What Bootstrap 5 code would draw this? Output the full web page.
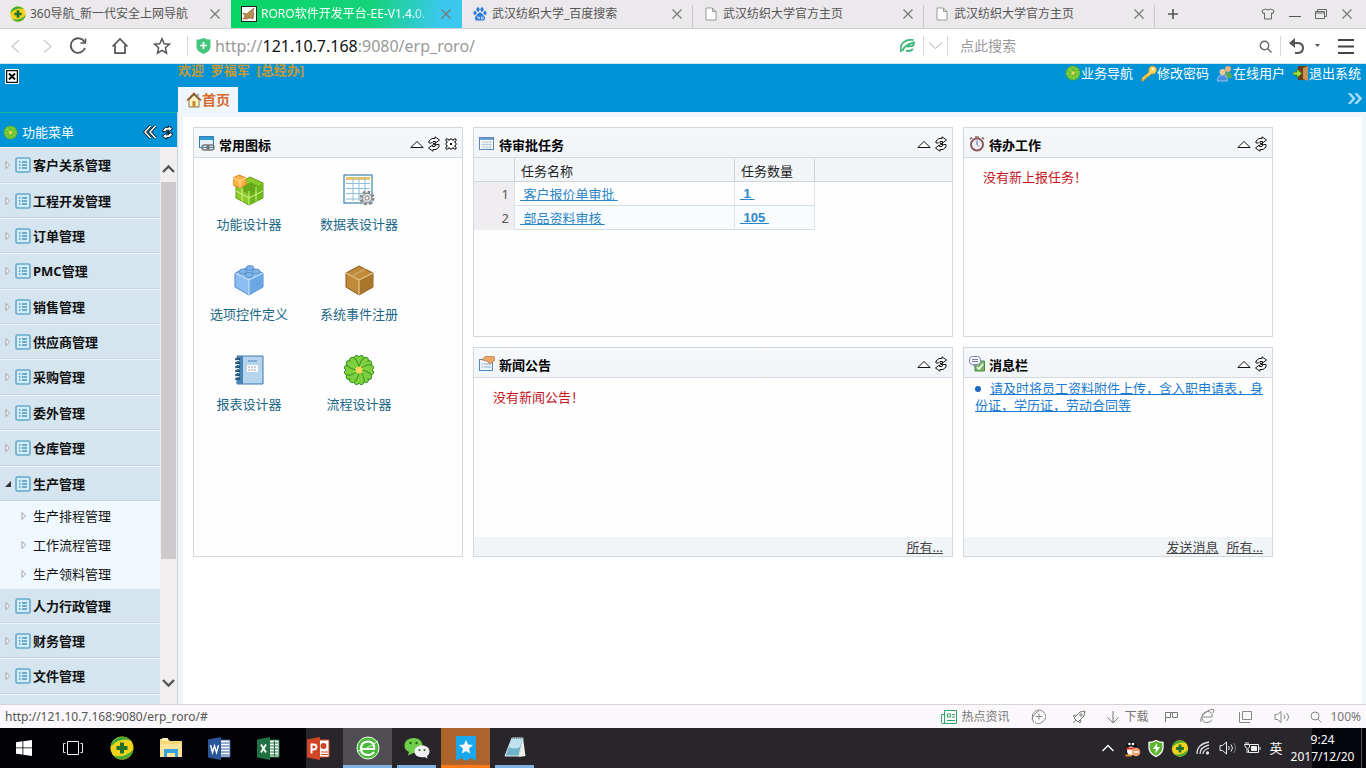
<!DOCTYPE html>
<html lang="zh-CN">
<head>
<meta charset="utf-8">
<meta name="viewport" content="width=device-width, initial-scale=1">
<title>RORO软件开发平台-EE-V1.4.0</title>
<link href="https://cdn.jsdelivr.net/npm/bootstrap@5.3.0/dist/css/bootstrap.min.css" rel="stylesheet">
<style>
body{font-family:"Noto Sans","Noto Sans CJK SC",sans-serif;font-size:13px;line-height:18px;color:#111;background:#fff}
svg{display:block;flex:none}
button{background:none;border:0;padding:0;color:inherit;display:flex;align-items:center;justify-content:center;flex:none}
a{color:inherit;text-decoration:none}
.fs12{font-size:12px}
/* browser tabs */
.tabbar{height:29px;flex:none;background:#ebe9eb;border-bottom:1px solid #d4d0d4;color:#555;font-size:12px}
.btab{flex:0 1 231px;min-width:0;padding:0 10px;gap:4px;position:relative}
.btab.sep::after{content:"";position:absolute;right:0;top:5px;height:23px;border-right:1px solid #cbc8cb}
.btab .cap{flex:1;min-width:0;overflow:hidden;white-space:nowrap}
.btab.current{background:linear-gradient(100deg,#08d564 0,#14d37a 60%,#3bc8ee 90%);color:#fff}
.btab.current .cap{-webkit-mask-image:linear-gradient(90deg,#000 85%,transparent)}
.winbtns{gap:14px;padding-right:13px;color:#666}
/* address bar */
.addr{height:35px;flex:none;border-bottom:1px solid #d5e4ec;color:#555}
.navbtn{width:31px;height:30px}
.navbtn.wide{width:42px}
.navgap{margin-left:6px}
.vline{width:1px;height:20px;background:#d9d9d9;flex:none}
.url{font-size:16px;line-height:24px;color:#999;white-space:nowrap}
.url b{font-weight:400;color:#111}
.find{width:299px;border:0;outline:0;font-size:14px;padding:0;color:#555}
.find::placeholder{color:#999;opacity:1}
.edge{margin-right:10px}
/* application */
.apphead{height:48px;flex:none;background:#0093d8}
.brand{width:178px;padding:5px}
.missing{width:14px;height:15px;border:1px solid #fff;background:#fff}
.hello{color:#c99a32;font-weight:700;line-height:13px}
.tools{gap:8px;color:#fff;padding-right:5px}
.hometab{width:60px;height:25px;background:#f0f6fd;color:#d9692b;font-weight:700;font-size:14px;margin-top:10px}
.side{width:178px;border-right:1px solid #cfd3dc}
.sidehead{height:35px;flex:none;background:#0093d8;border-top:1px solid #1cb3a0;color:#fff;padding:4px 4px 0 3px;margin-right:-1px}
.menu a{display:flex;align-items:center;gap:2px;height:35px;padding-left:5px;font-weight:700;color:#111;background:#d5e5f0;border-top:1px solid #eef6fb;border-bottom:1px solid #c3d4e0}
.menu a.tall{height:36px}
.menu .caret{width:8px}
.sub{background:#f0f8ff}
.menu .sub a{height:29px;font-weight:400;background:none;border:0;padding-left:21px;gap:4px}
.bar{width:17px;background:#f0eeef;padding:17px 1px 0}
.thumb{height:377px;background:#cdcacd;margin-top:8px}
.stage{background:#eef5fc;padding:5px 4px 0 5px}
.sheet{display:grid;grid-template-columns:270fr 480fr 310fr 79fr;grid-template-rows:210px 210px;gap:10px;padding:10px 0 0 10px;background:#fff}
.panel{border:1px solid #d3d8dd;background:#fefefe;display:flex;flex-direction:column;min-width:0}
.panel.both{grid-row:span 2}
.panel.mid{grid-column:2}
.panel.end{grid-column:3}
.phead{height:30px;background:linear-gradient(#f6f8fb,#f1f4f8);border-bottom:1px solid #d3d8dd;padding:2px 4px 0 5px;gap:4px}
.phead h2{font-size:13px;line-height:18px;font-weight:700;margin:3px 0 0;flex:1;color:#000}
.phead .btns{gap:3px}
.pfoot{height:19px;background:#f2f5f8;color:#444;padding-right:9px;gap:8px}
.pfoot a{text-decoration:underline}
.none{color:#c4141c;padding:10px 19px}
.shortcut{width:110px;height:90px;color:#1c6787;padding-top:16px;gap:9px}
.grid{width:100%;border-collapse:separate;border-spacing:0;table-layout:fixed}
.grid th{height:24px;background:#f2f5f8;font-weight:400;border-right:1px solid #ccd5da;border-bottom:1px solid #cfd6db;padding:2px 6px 0;color:#222}
.grid th:last-child{border-right:0}
.grid td{height:24px;border-right:1px solid #dbe3ea;border-bottom:1px solid #d3e0e4;padding:0 5px}
.grid td:first-child{background:#efedf0;text-align:right;color:#555;border-bottom-color:#efedf0}
.grid td:last-child{border:0}
.grid tr.alt td:nth-child(n+2):nth-child(-n+3){background:#f9fcff}
.grid a{color:#2b86c8;text-decoration:underline;white-space:pre}
.num{font-family:"Liberation Sans",sans-serif;font-weight:700}
.msg{padding:2px 6px 0 11px;line-height:17px;color:#1b7bd0}
.msg a{text-decoration:underline}
.dot{display:inline-block;width:6px;height:6px;border-radius:50%;background:#1a68c4;margin:0 9px 1px 0}
/* status bar and taskbar */
.status{height:24px;flex:none;background:#faf8fb;border-top:1px solid #d6d2d6;color:#777;padding:0 5px}
.status .url{font-size:12px;color:#555}
.sgap{margin-left:22px}
.sgap2{margin-left:26px}
.task{height:40px;flex:none;background:#28262a;color:#fff}
.pins{background:linear-gradient(90deg,#030207 306px,#28262a 306px)}
.pin{width:49px;height:40px;border-bottom:3px solid transparent;padding-top:3px}
.pin:first-child{width:48px}
.pins .pin:last-child{width:50px}
.pin.run{border-bottom-color:#7fb2e2;width:39px;margin:0 5px}
.pin.on{background:#504e52;border-bottom-color:#7fb2e2;width:49px}
.pin.hot{background:#ad642c;border-bottom-color:#ff7a18}
.tray>*{width:24px;text-align:center}
.clock{background:linear-gradient(90deg,#28262a 24px,#04040b 24px);font-size:12px;line-height:17px;padding-right:4px;width:74px;border-right:1px solid #555;white-space:nowrap}
.peek{width:4px;background:#04040b}
</style>
</head>
<body class="vh-100 d-flex flex-column overflow-hidden">

<svg width="0" height="0" class="position-absolute" aria-hidden="true">
  <symbol id="x" viewBox="0 0 12 12"><path d="M1.500 1.500l9 9m0-9l-9 9" stroke="#777" stroke-width="1.200" fill="none"/></symbol>
  <symbol id="page" viewBox="0 0 12 14"><path d="M1 1h6.500L11 4.500V13H1zM7.500 1v3.500H11" fill="#fff" stroke="#999"/></symbol>
  <symbol id="c360" viewBox="0 0 24 24"><circle cx="12" cy="12" r="11.500" fill="#f4d31d"/><path d="M.5 11C2 1 14-3 21 5c-6-3-15-1-20.500 6zM23.500 13c-1 10-14 14-20.500 6 6 3 15 1 20.500-6z" fill="#3faa35"/><path d="M12 6.500v11M6.500 12h11" stroke="#23702b" stroke-width="4"/></symbol>
  <symbol id="flower" viewBox="0 0 32 32"><g fill="#7ed03c" stroke="#35912a" stroke-width="1"><path id="pt" d="M16 16C10 10 9.500 2.500 13 1.500q2.500-.3 3 1.500 .5-1.800 3-1.500C22.500 2.500 22 10 16 16z"/><use href="#pt" transform="rotate(45 16 16)"/><use href="#pt" transform="rotate(90 16 16)"/><use href="#pt" transform="rotate(135 16 16)"/><use href="#pt" transform="rotate(180 16 16)"/><use href="#pt" transform="rotate(225 16 16)"/><use href="#pt" transform="rotate(270 16 16)"/><use href="#pt" transform="rotate(315 16 16)"/></g><circle cx="16" cy="16" r="3.500" fill="#fbd45b"/></symbol>
  <symbol id="list" viewBox="0 0 16 16"><rect x="1" y="1" width="14" height="14" rx="1.500" fill="#d3ecf8" stroke="#66a9cc" stroke-width="1.600"/><path d="M4 5h1.500M4 8h1.500M4 11h1.500M7 5h5M7 8h5M7 11h5" stroke="#4e95bd" stroke-width="1.300"/></symbol>
  <symbol id="tri" viewBox="0 0 8 10"><path d="M1 1.500v7L4.500 5z" fill="#f7fafc" stroke="#999" stroke-width=".9"/></symbol>
  <symbol id="up" viewBox="0 0 14 12"><path d="M.8 9.500h12.400L7 3.500z" fill="#fff" stroke="#111"/></symbol>
  <symbol id="re" viewBox="0 0 14 16"><path d="M2 7V5l3-2.500h3V.8L12.500 4 8.500 7V5.500H6L4.500 7zM12 8.500V11L9 13.500H6v1.700L1.500 12 5.500 9v1.500H8l1.500-2z" fill="#fff" stroke="#111"/><path d="M6 6.500l3 1v2l-3-1z" fill="#111"/></symbol>
  <symbol id="gear" viewBox="0 0 14 14"><path d="M2 2h2l1 1.500L6 2h2l1 1.500L10 2h2v2l-1.500 1L12 6v2l-1.500 1 1.500 1v2h-2l-1-1.500L8 12H6l-1-1.500L4 12H2v-2l1.500-1L2 8V6l1.500-1L2 4z" fill="#fff" stroke="#111"/><path d="M6 6h2v2H6z" fill="#111"/></symbol>
</svg>

<div class="tabbar d-flex">
  <div class="btab d-flex align-items-center"><svg width="16" height="16"><use href="#c360"/></svg><span class="cap">360导航_新一代安全上网导航</span><button aria-label="关闭"><svg width="12" height="12"><use href="#x"/></svg></button></div>
  <div class="btab current d-flex align-items-center"><svg width="16" height="16" viewBox="0 0 16 16"><rect x=".5" y=".5" width="15" height="15" fill="#fff" stroke="#222"/><path d="M2 13l2-3-2-3 4 1 2-2 5-4-1 4 1 2-1 5-3-1-3 1z" fill="#b98a52" stroke="#7c5a34" stroke-width=".6"/></svg><span class="cap">RORO软件开发平台-EE-V1.4.0.</span><button aria-label="关闭"><svg width="12" height="12"><use href="#x"/></svg></button></div>
  <div class="btab sep d-flex align-items-center"><svg width="16" height="14" viewBox="0 0 14 14" fill="#2f7ae0"><ellipse cx="2" cy="6" rx="1.600" ry="2"/><ellipse cx="5" cy="2.500" rx="1.600" ry="2.200"/><ellipse cx="9" cy="2.500" rx="1.600" ry="2.200"/><ellipse cx="12" cy="6" rx="1.600" ry="2"/><path d="M7 5.500c2 0 2.500 2 4 3.500s1.500 4.500-1 4.500H4c-2.500 0-2.500-3-1-4.500s2-3.500 4-3.500z"/><path d="M5 9v3m0-1.500h1.500V12M8.500 9.500V12H10V9.500" stroke="#fff" stroke-width=".7" fill="none"/></svg><span class="cap">武汉纺织大学_百度搜索</span><button aria-label="关闭"><svg width="12" height="12"><use href="#x"/></svg></button></div>
  <div class="btab sep d-flex align-items-center"><svg width="16" height="14"><use href="#page"/></svg><span class="cap">武汉纺织大学官方主页</span><button aria-label="关闭"><svg width="12" height="12"><use href="#x"/></svg></button></div>
  <div class="btab sep d-flex align-items-center"><svg width="16" height="14"><use href="#page"/></svg><span class="cap">武汉纺织大学官方主页</span><button aria-label="关闭"><svg width="12" height="12"><use href="#x"/></svg></button></div>
  <button class="px-2 ms-1" aria-label="新标签页"><svg width="12" height="12" viewBox="0 0 12 12"><path d="M6 1v10M1 6h10" stroke="#555" stroke-width="1.600"/></svg></button>
  <div class="winbtns d-flex align-items-center ms-auto">
    <button aria-label="皮肤"><svg width="14" height="12" viewBox="0 0 14 12" fill="none" stroke="#666"><path d="M4.500 1Q7 3 9.500 1L13 2.500 12 5.500l-1.500-.5v6h-7V5L2 5.500 1 2.500z"/></svg></button>
    <button aria-label="最小化"><svg width="12" height="12" viewBox="0 0 12 12"><path d="M0 8.500h12" stroke="#555"/></svg></button>
    <button aria-label="还原"><svg width="12" height="12" viewBox="0 0 12 12" fill="none" stroke="#666"><path d="M.5 3.500h9v7h-9zM2.500 3.500v-2h9v7h-2M.5 5h9"/></svg></button>
    <button aria-label="关闭窗口"><svg width="12" height="12"><use href="#x"/></svg></button>
  </div>
</div>

<div class="addr d-flex align-items-center">
  <button class="navbtn" aria-label="后退"><svg width="16" height="16" viewBox="0 0 16 16"><path d="M11 2L4 8.500l7 6" fill="none" stroke="#ccc" stroke-width="1.300"/></svg></button>
  <button class="navbtn" aria-label="前进"><svg width="16" height="16" viewBox="0 0 16 16"><path d="M5 2l7 6.500-7 6" fill="none" stroke="#ccc" stroke-width="1.300"/></svg></button>
  <button class="navbtn" aria-label="刷新"><svg width="18" height="18" viewBox="0 0 18 18" fill="none" stroke="#555" stroke-width="1.800"><path d="M15.500 5A7.300 7.300 0 1 0 16 11"/><path d="M16.500 1.500v4.500h-5" stroke-width="1.500"/></svg></button>
  <button class="navbtn wide navgap" aria-label="主页"><svg width="18" height="18" viewBox="0 0 18 18" fill="none" stroke="#555" stroke-width="1.700"><path d="M1.500 9.500L9 2l7.500 7.500M4 8v8.200h10V8"/></svg></button>
  <button class="navbtn wide" aria-label="收藏"><svg width="18" height="18" viewBox="0 0 18 18" fill="none" stroke="#555" stroke-width="1.500"><path d="M9 1.700l2.200 5 5.200.5-4 3.600 1.200 5.300L9 13.300l-4.600 2.800 1.200-5.300-4-3.600 5.200-.5z"/></svg></button>
  <span class="vline ms-1"></span>
  <svg class="ms-2 me-1" width="15" height="16" viewBox="0 0 15 16"><path d="M.5 1.500h3l4-1.500 4 1.500h3v7q0 5-7 7.500-7-2.500-7-7.500z" fill="#43c57b"/><path d="M7.500 4v7M4 7.500h7" stroke="#fff" stroke-width="1.700"/></svg>
  <div class="url flex-fill">http://<b>121.10.7.168</b>:9080/erp_roro/</div>
  <button class="me-2" aria-label="极速模式"><svg width="15" height="14" viewBox="0 0 15 14" fill="none" stroke="#43b97c" stroke-width="1.900"><path d="M1 13Q-.5 6 4 3T13.500 1M2.500 12Q4 6 14 3.500q0 3-2 3.500L7 7.500M6 11.500q4 1.500 7-1.500"/></svg></button>
  <span class="vline"></span>
  <button class="px-1" aria-label="展开"><svg width="15" height="10" viewBox="0 0 15 10"><path d="M1 1.500l6.500 6 6.500-6" fill="none" stroke="#aaa"/></svg></button>
  <span class="vline me-2"></span>
  <input class="find ms-1" type="text" placeholder="点此搜索" aria-label="搜索">
  <button class="me-2" aria-label="开始搜索"><svg width="13" height="13" viewBox="0 0 13 13" fill="none" stroke="#666" stroke-width="1.400"><circle cx="5.500" cy="5.500" r="4.200"/><path d="M8.500 8.500l4 4"/></svg></button>
  <span class="vline me-2"></span>
  <button class="edge" aria-label="撤销"><svg width="16" height="17" viewBox="0 0 16 17"><path d="M3 5h6q5 .5 5 5t-5 5H6" fill="none" stroke="#555" stroke-width="2"/><path d="M0 5l6-5v10z" fill="#555"/></svg></button>
  <button class="me-3" aria-label="更多"><svg width="5" height="4"><path d="M0 0h5L2.500 3z" fill="#555"/></svg></button>
  <button class="edge" aria-label="菜单"><svg width="20" height="16" viewBox="0 0 20 16"><path d="M2 2h16M2 8.500h16M2 15h16" stroke="#444" stroke-width="1.800"/></svg></button>
</div>

<header class="apphead d-flex">
  <div class="brand"><div class="missing"><svg width="12" height="13" viewBox="0 0 12 13"><rect x=".5" y=".5" width="11" height="12" fill="#fff" stroke="#111" stroke-width="1.500"/><path d="M3 3.500l6 6m0-6l-6 6" stroke="#111" stroke-width="2"/></svg></div></div>
  <div class="flex-fill">
    <div class="hello">欢迎&nbsp; 罗福军&nbsp; [总经办]</div>
    <a href="#" class="hometab d-flex align-items-center justify-content-center"><svg width="16" height="16" viewBox="0 0 16 16"><path d="M3 8v7h10V8L8 3z" fill="#fdf3c4" stroke="#8b7548"/><path d="M1 8.500L8 1.500l7 7" fill="none" stroke="#8c5a26" stroke-width="1.600"/><path d="M6.500 9h3v6h-3z" fill="#c98a2c"/><path d="M12 1.500v4" stroke="#999" stroke-width="1.500"/></svg>首页</a>
  </div>
  <div class="d-flex flex-column align-items-end justify-content-between">
    <nav class="tools d-flex">
      <a href="#" class="d-flex"><svg width="16" height="18"><use href="#flower"/></svg>业务导航</a>
      <a href="#" class="d-flex"><svg width="16" height="18" viewBox="0 0 16 18"><path d="M1 14l7-6q-1-6 4-6 5 1 3 6-2 3-5 2l-3 3H5v2H3v2H1z" fill="#ffd75e" stroke="#c78a22" stroke-width=".8"/><circle cx="12" cy="5" r="1.200" fill="#fff"/></svg>修改密码</a>
      <a href="#" class="d-flex"><svg width="16" height="18" viewBox="0 0 16 18"><circle cx="11" cy="5" r="3" fill="#efb27a"/><path d="M7 14q0-6 4-6t4.500 6z" fill="#58a860"/><circle cx="5.500" cy="8" r="3" fill="#f4c595"/><path d="M.5 17q0-6 5-6t5 6z" fill="#4d8de0" stroke="#d9e8fa" stroke-width=".6"/></svg>在线用户</a>
      <a href="#" class="d-flex"><svg width="16" height="18" viewBox="0 0 16 18"><path d="M5 2h10v14H5z" fill="#6a3d1f"/><path d="M10 4l5-2v15l-5-2z" fill="#c99256"/><path d="M0 8h4V5l5 4.500L4 14v-3H0z" fill="#a4e03c" stroke="#3c7d1b" stroke-width=".8"/></svg>退出系统</a>
    </nav>
    <button class="pe-1 pb-2" aria-label="更多标签"><svg width="14" height="11" viewBox="0 0 14 11"><path d="M1 0l5 5.500L1 11M7.500 0l5 5.500-5 5.500" fill="none" stroke="#a5dcff" stroke-width="2.400"/></svg></button>
  </div>
</header>

<div class="d-flex flex-fill overflow-hidden">
  <aside class="side d-flex flex-column flex-shrink-0 overflow-hidden">
    <div class="sidehead d-flex align-items-center"><svg width="15" height="15"><use href="#flower"/></svg><span class="ms-1 flex-fill">功能菜单</span>
      <button class="me-1" aria-label="折叠菜单"><svg width="14" height="14" viewBox="0 0 14 14" fill="none"><path d="M7.500 1L2 7l5.500 6M12.500 1L7 7l5.500 6" stroke="#111" stroke-width="3"/><path d="M7.500 1L2 7l5.500 6M12.500 1L7 7l5.500 6" stroke="#fff" stroke-width="1.400"/></svg></button>
      <button aria-label="刷新菜单"><svg width="13" height="15"><use href="#re"/></svg></button></div>
    <div class="d-flex flex-fill overflow-hidden">
      <nav class="menu flex-fill">
        <a href="#" class="tall"><svg class="caret" height="10"><use href="#tri"/></svg><svg width="16" height="16"><use href="#list"/></svg>客户关系管理</a>
        <a href="#"><svg class="caret" height="10"><use href="#tri"/></svg><svg width="16" height="16"><use href="#list"/></svg>工程开发管理</a>
        <a href="#"><svg class="caret" height="10"><use href="#tri"/></svg><svg width="16" height="16"><use href="#list"/></svg>订单管理</a>
        <a href="#" class="tall"><svg class="caret" height="10"><use href="#tri"/></svg><svg width="16" height="16"><use href="#list"/></svg>PMC管理</a>
        <a href="#"><svg class="caret" height="10"><use href="#tri"/></svg><svg width="16" height="16"><use href="#list"/></svg>销售管理</a>
        <a href="#"><svg class="caret" height="10"><use href="#tri"/></svg><svg width="16" height="16"><use href="#list"/></svg>供应商管理</a>
        <a href="#" class="tall"><svg class="caret" height="10"><use href="#tri"/></svg><svg width="16" height="16"><use href="#list"/></svg>采购管理</a>
        <a href="#"><svg class="caret" height="10"><use href="#tri"/></svg><svg width="16" height="16"><use href="#list"/></svg>委外管理</a>
        <a href="#" class="tall"><svg class="caret" height="10"><use href="#tri"/></svg><svg width="16" height="16"><use href="#list"/></svg>仓库管理</a>
        <a href="#"><svg class="caret" height="10" viewBox="0 0 8 10"><path d="M6 2v6H0z" fill="#333"/></svg><svg width="16" height="16"><use href="#list"/></svg>生产管理</a>
        <div class="sub">
          <a href="#"><svg class="caret" height="10"><use href="#tri"/></svg>生产排程管理</a>
          <a href="#"><svg class="caret" height="10"><use href="#tri"/></svg>工作流程管理</a>
          <a href="#"><svg class="caret" height="10"><use href="#tri"/></svg>生产领料管理</a>
        </div>
        <a href="#"><svg class="caret" height="10"><use href="#tri"/></svg><svg width="16" height="16"><use href="#list"/></svg>人力行政管理</a>
        <a href="#"><svg class="caret" height="10"><use href="#tri"/></svg><svg width="16" height="16"><use href="#list"/></svg>财务管理</a>
        <a href="#" class="tall"><svg class="caret" height="10"><use href="#tri"/></svg><svg width="16" height="16"><use href="#list"/></svg>文件管理</a>
        <a href="#" aria-label="更多模块"><svg class="caret" height="10"></svg><svg width="16" height="16"><use href="#list"/></svg></a>
      </nav>
      <div class="bar d-flex flex-column align-items-stretch">
        <svg class="mx-auto" width="13" height="10" viewBox="0 0 13 10"><path d="M1 8l5.500-5.500L12 8" fill="none" stroke="#555" stroke-width="2.300"/></svg>
        <div class="thumb"></div>
        <svg class="mx-auto mt-auto mb-3" width="13" height="10" viewBox="0 0 13 10"><path d="M1 2l5.500 5.500L12 2" fill="none" stroke="#555" stroke-width="2.300"/></svg>
      </div>
    </div>
  </aside>

  <main class="stage flex-fill d-flex flex-column overflow-hidden">
    <div class="sheet flex-fill">
      <section class="panel both">
        <div class="phead d-flex align-items-center"><svg width="16" height="16" viewBox="0 0 16 16"><rect x=".5" y=".5" width="14" height="11" fill="#e3f0fa" stroke="#2f7fb2"/><path d="M1 2.500h13" stroke="#2f9bd2" stroke-width="3"/><rect x="3" y="9" width="7" height="5" rx="2.500" fill="none" stroke="#777" stroke-width="1.500"/><rect x="8" y="9" width="7" height="5" rx="2.500" fill="none" stroke="#777" stroke-width="1.500"/></svg><h2>常用图标</h2>
          <div class="btns d-flex"><button aria-label="收起"><svg width="14" height="12"><use href="#up"/></svg></button><button aria-label="刷新"><svg width="14" height="16"><use href="#re"/></svg></button><button aria-label="设置"><svg width="14" height="14"><use href="#gear"/></svg></button></div></div>
        <div class="d-flex flex-wrap align-content-start">
          <a href="#" class="shortcut d-flex flex-column align-items-center"><svg width="32" height="32" viewBox="0 0 32 32"><path d="M3 11l14-8 13 6v15l-14 7-13-7z" fill="#8dcc2c" stroke="#5c9c14"/><path d="M16 17l14-8v15l-14 7z" fill="#6fb81b"/><path d="M10 12l8-4 7 4-2 5-7 4-6-4z" fill="#66a818"/><path d="M3 17l13 7 14-7M16 17v14M9 14v14M23 13v14" stroke="#d4f08e" fill="none"/><path d="M0 4l6-3 7 3v7l-6 3-7-3z" fill="#ffb347" stroke="#dc8418"/><path d="M0 4l7 3 6-3M7 7v7" stroke="#ffe3ab" fill="none"/></svg>功能设计器</a>
          <a href="#" class="shortcut d-flex flex-column align-items-center"><svg width="32" height="32" viewBox="0 0 32 32"><rect x="1" y="1" width="28" height="28" fill="#fff" stroke="#3b83ad" stroke-width="1.200"/><path d="M3 4.500h24" stroke="#eac46a" stroke-width="3"/><path d="M3 9.500h24M3 14.500h24M3 19.500h24M3 25h24M10 3v24M16 3v24M22 3v24" stroke="#8cbdd9"/><circle cx="24" cy="24" r="6" fill="#e4e4e6" stroke="#888" stroke-width="3" stroke-dasharray="2.500 2.200"/><circle cx="24" cy="24" r="4.800" fill="#dcdce0" stroke="#888"/><circle cx="24" cy="24" r="2" fill="#fff" stroke="#888"/></svg>数据表设计器</a>
          <a href="#" class="shortcut d-flex flex-column align-items-center"><svg width="32" height="32" viewBox="0 0 32 32"><path d="M2 9l14-6 14 6v14l-14 8-14-8z" fill="#8cbdf0" stroke="#4c8ac4"/><path d="M16 16l14-7v14l-14 8z" fill="#6aa6e4"/><path d="M2 9l14 7 14-7M16 16v15" fill="none" stroke="#cfe6fc"/><g fill="#7eb4e8" stroke="#457fb8" stroke-width=".7"><ellipse cx="17" cy="4" rx="4" ry="2.500"/><ellipse cx="10" cy="7.500" rx="4" ry="2.500"/><ellipse cx="23" cy="7.500" rx="4" ry="2.500"/><ellipse cx="16" cy="11" rx="4" ry="2.500"/></g></svg>选项控件定义</a>
          <a href="#" class="shortcut d-flex flex-column align-items-center"><svg width="32" height="32" viewBox="0 0 32 32"><path d="M3 9l13-7 14 7v14l-14 8-13-8z" fill="#bf8a3a" stroke="#81581d"/><path d="M16 16l14-7v14l-14 8z" fill="#a9752b"/><path d="M3 9l13 7 14-7M16 16v15" fill="none" stroke="#f0d39c"/><path d="M9 12l13-7" stroke="#d0a25c" stroke-width="1.500"/></svg>系统事件注册</a>
          <a href="#" class="shortcut d-flex flex-column align-items-center"><svg width="32" height="32" viewBox="0 0 32 32"><path d="M4 2h26v28H4z" fill="#b5d4ee" stroke="#3c78ac"/><path d="M4 2h6v28H4z" fill="#4b84b4"/><path d="M14 11h11v7H14z" fill="#fff"/><path d="M15 7h9" stroke="#4f86b6"/><path d="M15 13h9M15 16h9" stroke="#999" stroke-dasharray="2 1"/><path d="M2 5h5M2 9h5M2 13h5M2 17h5M2 21h5M2 25h5" stroke="#1e4668" stroke-width="1.600"/><path d="M2 6.500h4M2 10.500h4M2 14.500h4M2 18.500h4M2 22.500h4" stroke="#dfe8f0"/></svg>报表设计器</a>
          <a href="#" class="shortcut d-flex flex-column align-items-center"><svg width="32" height="32"><use href="#flower"/></svg>流程设计器</a>
        </div>
      </section>

      <section class="panel mid">
        <div class="phead d-flex align-items-center"><svg width="16" height="16" viewBox="0 0 16 16"><rect x=".5" y="1.500" width="14" height="12" fill="#fff" stroke="#5b86b8"/><path d="M1 3h13" stroke="#6d9fd6" stroke-width="2"/><path d="M2 6h11M2 8.500h11M2 11h11M5 5v8M8 5v8M11 5v8" stroke="#b6c8da" stroke-width=".9"/></svg><h2>待审批任务</h2>
          <div class="btns d-flex"><button aria-label="收起"><svg width="14" height="12"><use href="#up"/></svg></button><button aria-label="刷新"><svg width="14" height="16"><use href="#re"/></svg></button></div></div>
        <table class="grid">
          <colgroup><col width="41"><col width="220"><col width="80"><col></colgroup>
          <thead><tr><th></th><th>任务名称</th><th>任务数量</th><th></th></tr></thead>
          <tbody>
            <tr><td>1</td><td><a href="#"> 客户报价单审批 </a></td><td><a href="#" class="num"> 1 </a></td><td></td></tr>
            <tr class="alt"><td>2</td><td><a href="#"> 部品资料审核 </a></td><td><a href="#" class="num"> 105 </a></td><td></td></tr>
          </tbody>
        </table>
      </section>

      <section class="panel end">
        <div class="phead d-flex align-items-center"><svg width="16" height="16" viewBox="0 0 16 16"><circle cx="8" cy="8.500" r="6" fill="#f0f2f8" stroke="#8c5a5c" stroke-width="2"/><path d="M8 4.500v4l2 2" fill="none" stroke="#4a62a0"/><path d="M6 1h4M1 3l2-1.500M15 3l-2-1.500" stroke="#8c6a6a" stroke-width="1.600"/></svg><h2>待办工作</h2>
          <div class="btns d-flex"><button aria-label="收起"><svg width="14" height="12"><use href="#up"/></svg></button><button aria-label="刷新"><svg width="14" height="16"><use href="#re"/></svg></button></div></div>
        <div class="none">没有新上报任务！</div>
      </section>

      <section class="panel mid">
        <div class="phead d-flex align-items-center"><svg width="16" height="16" viewBox="0 0 16 16"><rect x=".5" y="3.500" width="13" height="11" fill="#eef5fb" stroke="#4c8bc0"/><path d="M2.500 8h1.500M5 8h7M2.500 11h1.500M5 11h7" stroke="#8eabc4"/><path d="M3 4l3-3.500h9L16 4l-5 4-3-3z" fill="#e9a765" stroke="#b57434" stroke-width=".7"/></svg><h2>新闻公告</h2>
          <div class="btns d-flex"><button aria-label="收起"><svg width="14" height="12"><use href="#up"/></svg></button><button aria-label="刷新"><svg width="14" height="16"><use href="#re"/></svg></button></div></div>
        <div class="none">没有新闻公告！</div>
        <div class="pfoot d-flex align-items-center justify-content-end mt-auto"><a href="#">所有...</a></div>
      </section>

      <section class="panel end">
        <div class="phead d-flex align-items-center"><svg width="16" height="16" viewBox="0 0 16 16"><path d="M6 5h9.500v10H6z" fill="#7db868" stroke="#4d8c3d"/><path d="M8 11l2 2 4-5" stroke="#fff" stroke-width="1.500" fill="none"/><rect x=".5" y=".5" width="11" height="8" rx="3" fill="#f3f4fb" stroke="#7b82a8"/><path d="M4 8.500l1 3 3-3z" fill="#8d93b8"/><path d="M3 3.500h6M3 5.500h6" stroke="#7b82a8"/></svg><h2>消息栏</h2>
          <div class="btns d-flex"><button aria-label="收起"><svg width="14" height="12"><use href="#up"/></svg></button><button aria-label="刷新"><svg width="14" height="16"><use href="#re"/></svg></button></div></div>
        <div class="msg"><span class="dot"></span><a href="#">请及时将员工资料附件上传，含入职申请表，身份证，学历证，劳动合同等</a></div>
        <div class="pfoot d-flex align-items-center justify-content-end mt-auto"><a href="#">发送消息</a><a href="#">所有...</a></div>
      </section>
    </div>
  </main>
</div>

<footer class="status d-flex align-items-center fs12">
  <span class="url flex-fill">http://121.10.7.168:9080/erp_roro/#</span>
  <a href="#" class="d-flex align-items-center gap-1"><svg width="16" height="14" viewBox="0 0 16 14" fill="none" stroke="#2fa866"><path d="M3.500.5h12v13h-14q-1 0-1-1v-8h3zM3.500 4v9M6.500 4h3v3h-3zM11 4.500h3M11 7h3M6 10.500h8"/></svg>热点资讯</a>
  <a href="#" class="sgap" aria-label="加速"><svg width="15" height="15" viewBox="0 0 15 15" fill="none" stroke="#888"><path d="M2.500 13.500Q-.5 6 4 2.500t9 1-1 9-8 .5M8 4.500v6M5 7.500h6"/><path d="M1 11Q2 5 8 2"/></svg></a>
  <a href="#" class="sgap2" aria-label="火箭"><svg width="14" height="14" viewBox="0 0 14 14" fill="none" stroke="#777"><path d="M13 1L8 2 2 8l4 4 6-6zM4 5L1 6l2 2M9 10l-1 3-2-2M1 13l3-3"/><circle cx="9" cy="5" r="1.200"/></svg></a>
  <a href="#" class="ms-3 ps-1 d-flex align-items-center gap-1"><svg width="14" height="14" viewBox="0 0 14 14" fill="none" stroke="#777"><path d="M7 1v12M1.500 7.500L7 13l5.500-5.500"/></svg>下载</a>
  <a href="#" class="ms-3" aria-label="静音"><svg width="16" height="13" viewBox="0 0 16 13" fill="none" stroke="#777"><path d="M1.500 12V2.500h5v5h-5M6.500 2.500h7v5h-5v-5"/></svg></a>
  <a href="#" class="ms-3 ps-1" aria-label="浏览模式"><svg width="15" height="15" viewBox="0 0 15 15" fill="none" stroke="#888"><path d="M3 8h9q1-5-4-5.500-6 .5-6 6t6 5q3 0 4-3M1 13Q-.5 9 5 4t9-3l-1 3"/></svg></a>
  <a href="#" class="ms-4" aria-label="多窗口"><svg width="13" height="13" viewBox="0 0 13 13" fill="none" stroke="#888"><path d="M3.500 1.500h9v8h-9zM.5 2v10.500H11"/></svg></a>
  <a href="#" class="sgap" aria-label="音量"><svg width="16" height="14" viewBox="0 0 16 14" fill="none" stroke="#888"><path d="M1 4.500h2.500L7 1.500v11l-3.500-3H1zM10 5q2 2 0 4M12.500 3q4 4 0 8"/></svg></a>
  <a href="#" class="ms-3 ps-1 d-flex align-items-center gap-2"><svg width="12" height="12" viewBox="0 0 12 12" fill="none" stroke="#888"><circle cx="5" cy="5" r="4"/><path d="M8 8l3.500 3.500"/></svg>100%</a>
</footer>

<div class="task d-flex">
  <div class="pins d-flex">
    <button class="pin" aria-label="开始"><svg width="16" height="16" viewBox="0 0 16 16" fill="#fff"><path d="M0 2.300l6.500-1v6.200H0zM7.300 1.200L16 0v7.500H7.300zM0 8.300h6.500v6.300L0 13.700zM7.300 8.300H16V16l-8.700-1.200z"/></svg></button>
    <button class="pin" aria-label="任务视图"><svg width="20" height="16" viewBox="0 0 20 16" fill="none" stroke="#eee"><path d="M4.500 1.500h11v13h-11zM2.500 3.500h-2v9h2M17.500 3.500h2v9h-2"/></svg></button>
    <button class="pin" aria-label="360安全卫士"><svg width="24" height="24"><use href="#c360"/></svg></button>
    <button class="pin" aria-label="文件资源管理器"><svg width="22" height="20" viewBox="0 0 22 20"><path d="M0 1h8l2 2h12v16H0z" fill="#f7d774"/><path d="M2 0h6v3H2z" fill="#fff0b3"/><path d="M0 6h22v13H0z" fill="#fbe49a"/><path d="M4 11h14v8h-3v-4H7v4H4z" fill="#35a4dc"/></svg></button>
    <button class="pin" aria-label="Word"><svg width="23" height="23" viewBox="0 0 23 23"><path d="M12 3h10v17H12z" fill="#fff" stroke="#2a5699"/><path d="M13 6h8M13 9h8M13 12h8M13 15h8M13 18h8" stroke="#2a5699" stroke-width="1.200"/><path d="M0 2.500L13 0v23L0 20.500z" fill="#2a5699"/><path d="M2.500 8l2 7.500L6.500 9l2 6.500L10.500 8" fill="none" stroke="#fff" stroke-width="1.400"/></svg></button>
    <button class="pin" aria-label="Excel"><svg width="23" height="23" viewBox="0 0 23 23"><path d="M12 3h10v17H12z" fill="#fff" stroke="#207245"/><path d="M13 6h8M13 9h8M13 12h8M13 15h8M13 18h8M17.500 4v15" stroke="#207245" stroke-width="1.200"/><path d="M0 2.500L13 0v23L0 20.500z" fill="#207245"/><path d="M4 7.500l5 8m0-8l-5 8" fill="none" stroke="#fff" stroke-width="1.800"/></svg></button>
    <button class="pin" aria-label="PowerPoint"><svg width="23" height="23" viewBox="0 0 23 23"><path d="M12 3h10v17H12z" fill="#fff" stroke="#d04727"/><circle cx="16.500" cy="9" r="3" fill="#d04727"/><path d="M14 15h7M14 17.500h7" stroke="#d04727" stroke-width="1.200"/><path d="M0 2.500L13 0v23L0 20.500z" fill="#d04727"/><path d="M4.500 16.500V7.500h2q3 0 3 2.500t-3 2.500h-2" fill="none" stroke="#fff" stroke-width="1.900"/></svg></button>
  </div>
  <div class="d-flex">
    <button class="pin on" aria-label="360浏览器"><svg width="24" height="24" viewBox="0 0 24 24"><circle cx="12" cy="12" r="11" fill="#4bb93c" stroke="#f2fff0"/><path d="M5 13h13q1-7-6-7.500Q5 6 5 12.500t7 6.500q4 0 6-3" fill="none" stroke="#fff" stroke-width="2.200"/><path d="M1 15Q10 14 22 5" stroke="#dff7d9" fill="none"/></svg></button>
    <button class="pin run" aria-label="微信"><svg width="26" height="22" viewBox="0 0 26 22"><path d="M9.500 1c5 0 9 3 9 7.500S14.500 16 9.500 16L4 18.500 5 15Q.5 13 .5 8.500C.5 4 4.500 1 9.500 1z" fill="#72cf4b"/><path d="M18 8.500c4.500 0 7.500 2.500 7.500 6 0 2-1 3.500-2.500 4.500l.5 2.500-3-1.500c-6 1-10-1.500-10-5.500 0-3.500 3-6 7.500-6z" fill="#f2f2f4"/><g fill="#265a16"><circle cx="6.500" cy="6" r="1.200"/><circle cx="12.500" cy="6" r="1.200"/><circle cx="15.500" cy="13" r="1"/><circle cx="20.500" cy="13" r="1"/></g></svg></button>
    <button class="pin hot" aria-label="收藏夹"><svg width="20" height="25" viewBox="0 0 20 25"><path d="M0 0h20v25l-5-3-5 3-5-3-5 3z" fill="#1aa7ee"/><path d="M10 4l2 4.500 5 .5-4 3.500 1.200 5L10 15l-4.200 2.500 1.200-5L3 9l5-.5z" fill="#fff"/></svg></button>
    <button class="pin run" aria-label="记事本"><svg width="22" height="22" viewBox="0 0 22 22"><path d="M8 1h11l-4 18H1z" fill="#6fb1c6" stroke="#dbeef3"/><path d="M8 2h10l-2 8q-6 3-11 0z" fill="#bfe3ec"/><path d="M19 1l2.500 18-6.500 1z" fill="#eef0e6"/><path d="M8 1h11" stroke="#777" stroke-width="1.500" stroke-dasharray="1 1"/></svg></button>
  </div>
  <div class="tray d-flex align-items-center ms-auto">
    <svg height="10" viewBox="0 0 14 10"><path d="M1.500 8L7 2.500 12.500 8" fill="none" stroke="#fff" stroke-width="1.300"/></svg>
    <svg height="17" viewBox="0 0 17 17"><ellipse cx="8" cy="9" rx="6" ry="7.500" fill="#101014"/><ellipse cx="7.500" cy="11" rx="4" ry="4.500" fill="#fff"/><path d="M3 7.500h9l1 2H2z" fill="#d82c24"/><circle cx="6" cy="4" r="1.300" fill="#fff"/><circle cx="9.500" cy="4" r="1.300" fill="#fff"/><path d="M2 15.500h6" stroke="#e89020" stroke-width="2"/><circle cx="12.500" cy="12" r="4.300" fill="#f3a06e"/><path d="M10 12h5" stroke="#fff" stroke-width="1.400"/></svg>
    <svg height="17" viewBox="0 0 16 17"><path d="M8 .5q4 2 7 2v5q0 6-7 9-7-3-7-9v-5q3 0 7-2z" fill="#5cb531" stroke="#fff" stroke-width="1.300"/><path d="M9 3L5 9h3l-1 5 5-7H9z" fill="#fff"/></svg>
    <svg height="17"><use href="#c360"/></svg>
    <svg height="14" viewBox="0 0 16 14" fill="none" stroke="#ddd" stroke-width="1.300"><path d="M1 13Q1 3 13 1M4 13q0-7 9-9M7 13q0-4 6-6"/><circle cx="11.500" cy="12" r="1" fill="#fff"/></svg>
    <svg height="14" viewBox="0 0 17 14" fill="none" stroke="#eee"><path d="M.5 4.500H3l4-3.500v12L3 9.500H.5zM9 5q1.500 2 0 4M11.500 3.500q3 3.500 0 7"/><path d="M14 2q4 5 0 10" stroke="#777"/></svg>
    <svg height="14" viewBox="0 0 17 14" fill="none" stroke="#eee"><path d="M6 3.500h9v8H5v-3M16.500 6v3M1 3.500h5v3q-2 2-4 0zM2.500 1v2.500M4.500 1v2.500M3.500 8v4"/><path d="M8 5.500h5v4H8z" fill="#eee"/></svg>
    <span>英</span>
  </div>
  <div class="clock d-flex flex-column justify-content-center text-center"><span>9:24</span><span>2017/12/20</span></div>
  <div class="peek"></div>
</div>
<script src="https://cdn.jsdelivr.net/npm/bootstrap@5.3.0/dist/js/bootstrap.bundle.min.js"></script>
</body>
</html>
